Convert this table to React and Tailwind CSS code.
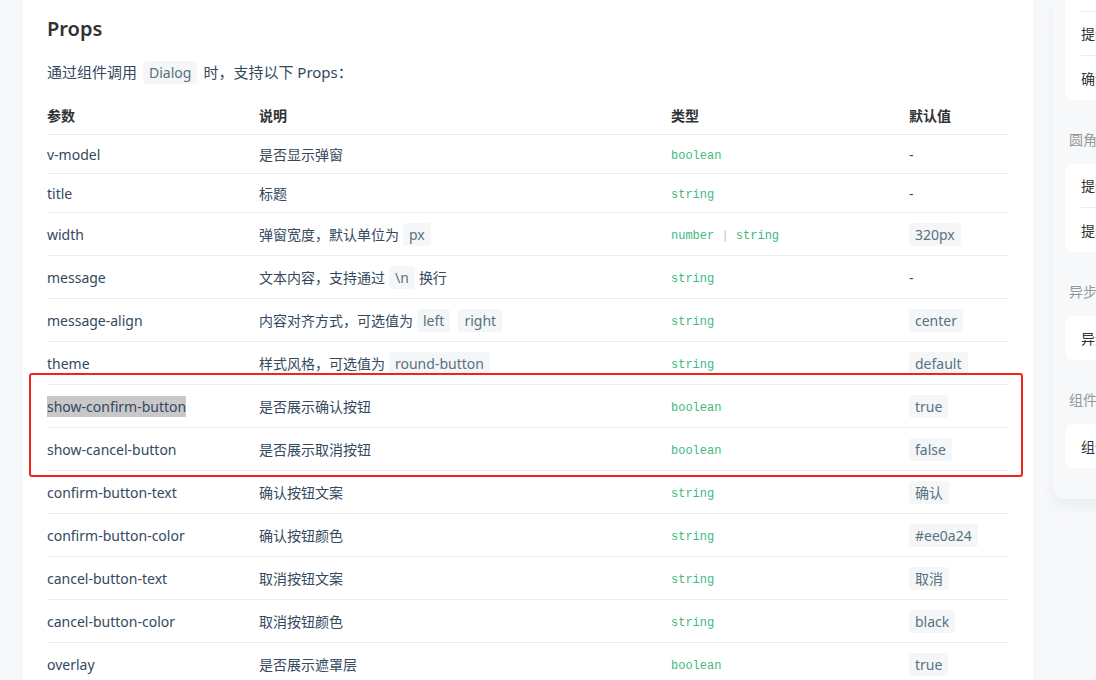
import React from 'react';

const rows = [
  { name: 'v-model', desc: ['是否显示弹窗'], type: ['boolean'], def: null },
  { name: 'title', desc: ['标题'], type: ['string'], def: null },
  { name: 'width', desc: ['弹窗宽度，默认单位为', { code: 'px' }], type: ['number', 'string'], def: '320px' },
  { name: 'message', desc: ['文本内容，支持通过', { code: '\\n' }, '换行'], type: ['string'], def: null },
  { name: 'message-align', desc: ['内容对齐方式，可选值为', { code: 'left' }, { code: 'right' }], type: ['string'], def: 'center' },
  { name: 'theme', desc: ['样式风格，可选值为', { code: 'round-button' }], type: ['string'], def: 'default' },
  { name: 'show-confirm-button', desc: ['是否展示确认按钮'], type: ['boolean'], def: 'true', selected: true },
  { name: 'show-cancel-button', desc: ['是否展示取消按钮'], type: ['boolean'], def: 'false' },
  { name: 'confirm-button-text', desc: ['确认按钮文案'], type: ['string'], def: '确认' },
  { name: 'confirm-button-color', desc: ['确认按钮颜色'], type: ['string'], def: '#ee0a24' },
  { name: 'cancel-button-text', desc: ['取消按钮文案'], type: ['string'], def: '取消' },
  { name: 'cancel-button-color', desc: ['取消按钮颜色'], type: ['string'], def: 'black' },
  { name: 'overlay', desc: ['是否展示遮罩层'], type: ['boolean'], def: 'true' },
];

const demo = [
  { title: null, cells: ['提示弹窗', '提示弹窗（无标题）', '确认弹窗'] },
  { title: '圆角按钮风格', cells: ['提示弹窗', '提示弹窗（无标题）'] },
  { title: '异步关闭', cells: ['异步关闭'] },
  { title: '组件调用', cells: ['组件调用'] },
];

function Code({ children, className = '' }) {
  return (
    <code
      className={`inline-block h-[23px] px-[6px] rounded-[4px] bg-[#f5f6f8] text-[#58727e] text-[14px] leading-[23px] ${className}`}
      style={{ fontFamily: '"Noto Sans", "Noto Sans CJK SC", sans-serif' }}
    >
      {children}
    </code>
  );
}

function Row({ row }) {
  const tall = row.def !== null || row.desc.some((d) => typeof d !== 'string');
  return (
    <div
      className={`grid grid-cols-[212px_412px_238px_1fr] items-center border-b border-[#ebedf0] text-[14px] text-[#34495e] ${
        tall ? 'h-[43px]' : 'h-[39px]'
      }`}
    >
      <div>
        {row.selected ? (
          <span className="inline-block bg-[#c8c8c8] leading-[21px]">{row.name}</span>
        ) : (
          row.name
        )}
      </div>
      <div className="flex items-center">
        {row.desc.map((d, i) =>
          typeof d === 'string' ? (
            <span key={i}>{d}</span>
          ) : (
            <Code key={i} className="mx-[4px]">
              {d.code}
            </Code>
          )
        )}
      </div>
      <div className="mt-[4px] text-[12px] text-[#42b983]" style={{ fontFamily: '"Liberation Mono", monospace' }}>
        {row.type.map((t, i) => (
          <span key={i}>
            {i > 0 && <span className="text-[#c0c4cc]"> | </span>}
            {t}
          </span>
        ))}
      </div>
      <div>{row.def === null ? '-' : <Code>{row.def}</Code>}</div>
    </div>
  );
}

export default function App() {
  return (
    <div
      className="relative w-[1096px] h-[680px] overflow-hidden bg-[#f7f8fa] flex items-start pl-[23px] gap-[20px]"
      style={{ fontFamily: '"Noto Sans", "Noto Sans CJK SC", sans-serif' }}
    >
      {/* doc card */}
      <div className="w-[1010px] shrink-0 bg-white pt-[16px] pl-[24px] pr-[25px] pb-[40px]">
        <h3 className="text-[20px] leading-[26px] font-semibold text-[#323233]">Props</h3>
        <p className="mt-[17px] text-[15px] leading-[26px] text-[#34495e] flex items-center">
          通过组件调用<Code className="mx-[6px]">Dialog</Code>时，支持以下 Props：
        </p>
        <div className="mt-[11px]">
          <div className="grid grid-cols-[212px_412px_238px_1fr] items-center h-[39px] border-b border-[#ebedf0] text-[14px] font-bold text-[#323233]">
            <div>参数</div>
            <div>说明</div>
            <div>类型</div>
            <div>默认值</div>
          </div>
          {rows.map((r) => (
            <Row key={r.name} row={r} />
          ))}
        </div>
      </div>

      {/* demo simulator */}
      <div className="w-[375px] shrink-0 bg-[#f7f8fa] rounded-b-[12px] shadow-[0_8px_12px_#ebedf0] pb-[31px]">
        <div className="-mt-[32px]">
          {demo.map((g, gi) => (
            <div key={gi}>
              {g.title && (
                <div className="pt-[32px] pb-[16px] px-[16px] text-[14px] leading-[16px] text-[#969799]">{g.title}</div>
              )}
              <div className="mx-[12px] bg-white rounded-[8px] overflow-hidden">
                {g.cells.map((c, ci) => (
                  <div key={ci} className="pl-[16px]">
                    <div
                      className={`h-[44px] flex items-center text-[14px] text-[#323233] ${
                        ci < g.cells.length - 1 ? 'border-b border-[#ebedf0]' : ''
                      }`}
                    >
                      {c}
                    </div>
                  </div>
                ))}
              </div>
            </div>
          ))}
        </div>
      </div>

      {/* annotation box */}
      <div className="absolute left-[29px] top-[373px] w-[994px] h-[104px] border-2 border-[#f5221b] rounded-[3px] pointer-events-none" />
    </div>
  );
}
